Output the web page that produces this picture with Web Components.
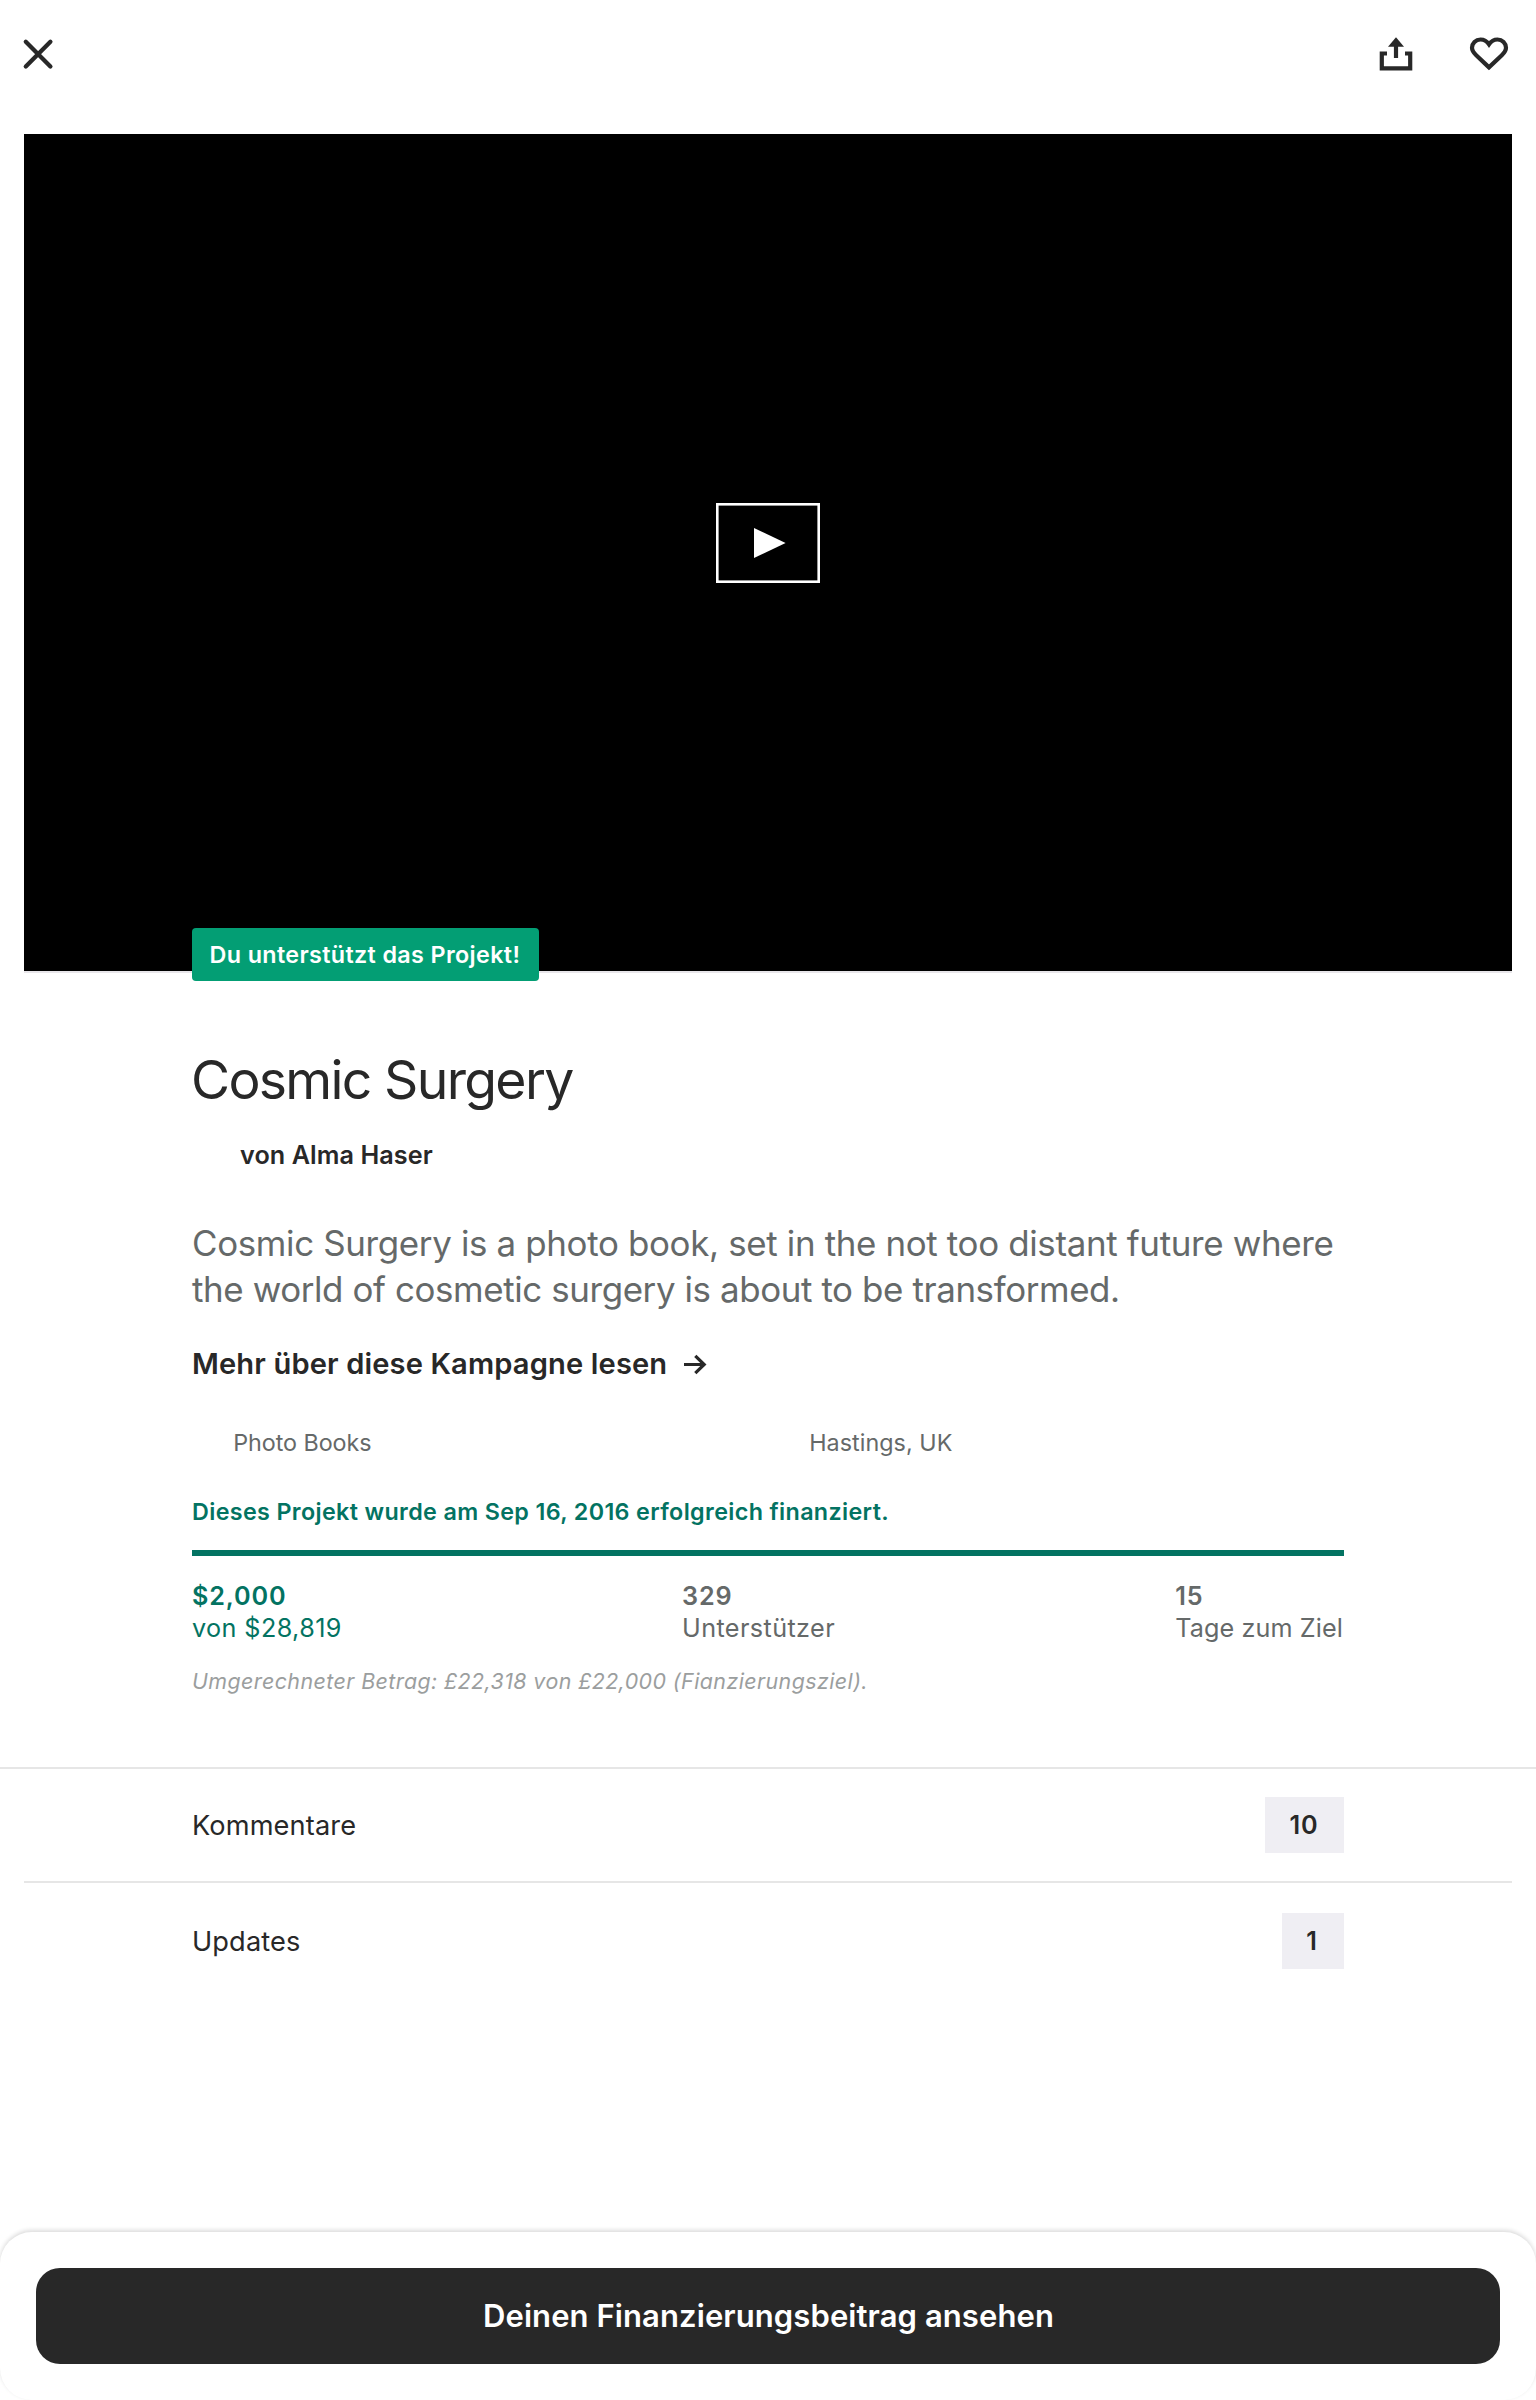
<!DOCTYPE html>
<html lang="de">
<head>
<meta charset="utf-8">
<title>Cosmic Surgery</title>
<style>
html,body{margin:0;padding:0;background:#fff}
body{font-family:Inter,"Liberation Sans",sans-serif;color:#282828}
</style>
</head>
<body>
<project-page></project-page>
<script>
const define = (name, html) => {
  const template = document.createElement('template');
  template.innerHTML = html;
  customElements.define(name, class extends HTMLElement {
    constructor() {
      super();
      this.attachShadow({ mode: 'open' }).append(template.content.cloneNode(true));
    }
  });
};

define('top-bar', `
<style>
:host{display:flex;justify-content:space-between;height:134px;box-sizing:border-box;padding:34px 24px 0 18px}
svg{display:block;width:40px;height:40px;overflow:visible;fill:none;stroke:#282828}
.actions{display:flex;gap:53px;padding-right:3px}
</style>
<svg viewBox="0 0 40 40" stroke-width="4.3" stroke-linecap="round"><path d="M7.8 7.8 32.4 32.4M32.4 7.8 7.8 32.4"/></svg>
<div class="actions">
<svg viewBox="0 0 40 40" stroke-width="4.2"><path d="M11 19.5H5.8V34.4H34.2V19.5H29"/><path d="M20 24V11"/><path d="M20 3.3 28 12.7H12Z" fill="#282828" stroke="none"/></svg>
<svg viewBox="0 0 40 40" stroke-width="4.2"><path d="M20 33.4 7.2 21.3C4.2 18.4 3 16.5 3 13.8 3 9.2 6.7 5.5 11.5 5.5 15 5.5 18 7.3 20 10.3 22 7.3 25 5.5 28.5 5.5 33.3 5.5 37 9.2 37 13.8 37 16.5 35.8 18.4 32.8 21.3Z"/></svg>
</div>`);

define('video-stage', `
<style>
:host{display:flex;align-items:center;justify-content:center;position:relative;height:837px;margin:0 24px;background:#000;border-bottom:2px solid #e8e6ea}
svg{display:block;width:104px;height:80px;margin-bottom:19px}
.tag{position:absolute;left:168px;top:794px}
</style>
<svg viewBox="0 0 104 80"><rect x="1.3" y="1.3" width="101.4" height="77.4" fill="none" stroke="#fff" stroke-width="2.6"/><path d="M38 25 69.6 40 38 55Z" fill="#fff"/></svg>
<div class="tag"><slot></slot></div>`);

define('backer-tag', `
<style>
:host{display:block;box-sizing:border-box;width:347px;height:53px;padding-left:17.6px;border-radius:4px;background:#039e74;color:#fff;font-size:23.3px;font-weight:600;line-height:53px;letter-spacing:.37px;white-space:nowrap}
</style><slot></slot>`);

define('project-author', `
<style>:host{display:block;margin-top:25px;padding-left:48px;font-size:25.2px;font-weight:600;line-height:32px;letter-spacing:.07px}</style><slot></slot>`);

define('more-link', `
<style>
:host{display:flex;align-items:center;gap:16px;margin-top:34px;font-size:29.1px;font-weight:600;line-height:36px;letter-spacing:.14px}
svg{width:24px;height:24px;margin-bottom:1px;fill:none;stroke:#282828;stroke-width:3.2}
</style>
<span><slot></slot></span>
<svg viewBox="0 0 24 24"><path d="M1 12.5H22M12.3 3.8 21.2 12.5 12.3 21.2"/></svg>`);

define('meta-item', `
<style>:host{display:block;flex:1;padding-left:41.2px;font-size:23.3px;line-height:28px;color:#656969;letter-spacing:var(--track,-.04px)}</style><slot></slot>`);

define('funding-stat', `
<style>
:host{display:block;font-size:25.2px;line-height:32px;color:#656969;white-space:nowrap;letter-spacing:var(--track,.4px)}
:host([raised]){color:#037362}
.value{font-weight:600;letter-spacing:.85px}
</style>
<div class="value"><slot name="value"></slot></div>
<div><slot></slot></div>`);

define('project-story', `
<style>
:host{display:flex;flex-direction:column;box-sizing:border-box;height:794px;padding:73px 192px 0}
h1{margin:0 0 0 -1px;font-size:53.5px;font-weight:400;line-height:68px;letter-spacing:-1.68px}
.blurb{margin-top:49px;font-size:34.9px;line-height:46px;color:#656969;letter-spacing:-.34px;white-space:nowrap}
.blurb div+div{letter-spacing:-.39px}
.meta{display:flex;margin-top:47px}
.funded{margin-top:41px;font-size:23.3px;font-weight:600;line-height:28px;letter-spacing:.36px;color:#037362}
.bar{height:6px;margin-top:24px;background:#037362}
.stats{display:flex;justify-content:space-between;margin:24px 1px 0 0}
.note{margin-top:24px;font-size:21.4px;font-style:italic;line-height:26px;letter-spacing:.43px;color:#9b9e9e}
</style>
<h1>Cosmic Surgery</h1>
<project-author>von Alma Haser</project-author>
<div class="blurb"><div>Cosmic Surgery is a photo book, set in the not too distant future where</div><div>the world of cosmetic surgery is about to be transformed.</div></div>
<more-link>Mehr über diese Kampagne lesen</more-link>
<div class="meta"><meta-item>Photo Books</meta-item><meta-item style="--track:.05px">Hastings, UK</meta-item></div>
<div class="funded">Dieses Projekt wurde am Sep 16, 2016 erfolgreich finanziert.</div>
<div class="bar"></div>
<div class="stats">
<funding-stat raised><span slot="value">$2,000</span>von $28,819</funding-stat>
<funding-stat><span slot="value">329</span>Unterstützer</funding-stat>
<funding-stat style="--track:.1px"><span slot="value">15</span>Tage zum Ziel</funding-stat>
</div>
<div class="note">Umgerechneter Betrag: £22,318 von £22,000 (Fianzierungsziel).</div>`);

define('list-row', `
<style>
:host{display:flex;align-items:center;justify-content:space-between;height:112px;margin:0 24px;padding:0 168px;font-size:27.2px;line-height:36px;letter-spacing:.12px}
.label{padding-top:1px}
.count{display:block;box-sizing:border-box;width:var(--count-width);height:56px;padding-right:var(--count-shift);background:#efeef3;text-align:center;font-size:25.2px;font-weight:600;line-height:56px;letter-spacing:.9px}
</style>
<span class="label"><slot></slot></span><span class="count"><slot name="count"></slot></span>`);

define('pledge-bar', `
<style>
:host{display:flex;box-sizing:border-box;height:168px;margin-top:auto;padding:36px;border-radius:32px;background:#fff;box-shadow:0 -2px 4px rgba(0,0,0,.14)}
button{flex:1;height:96px;padding:0 0 0 1px;border:0;border-radius:24px;background:#282828;color:#fff;font:600 31px/96px Inter,"Liberation Sans",sans-serif;letter-spacing:.09px}
</style>
<button><slot></slot></button>`);

define('project-page', `
<style>
:host{display:flex;flex-direction:column;width:1536px;height:2400px;overflow:hidden;background:#fff}
.list{border-top:2px solid #e6e6e6}
.rule{height:2px;margin:0 24px;background:#e6e6e6}
</style>
<top-bar></top-bar>
<video-stage><backer-tag>Du unterstützt das Projekt!</backer-tag></video-stage>
<project-story></project-story>
<div class="list">
<list-row style="--count-width:79px;--count-shift:1px">Kommentare<span slot="count">10</span></list-row>
<div class="rule"></div>
<list-row style="height:116px;--count-width:62px;--count-shift:2px">Updates<span slot="count">1</span></list-row>
</div>
<pledge-bar>Deinen Finanzierungsbeitrag ansehen</pledge-bar>`);
</script>
</body>
</html>
